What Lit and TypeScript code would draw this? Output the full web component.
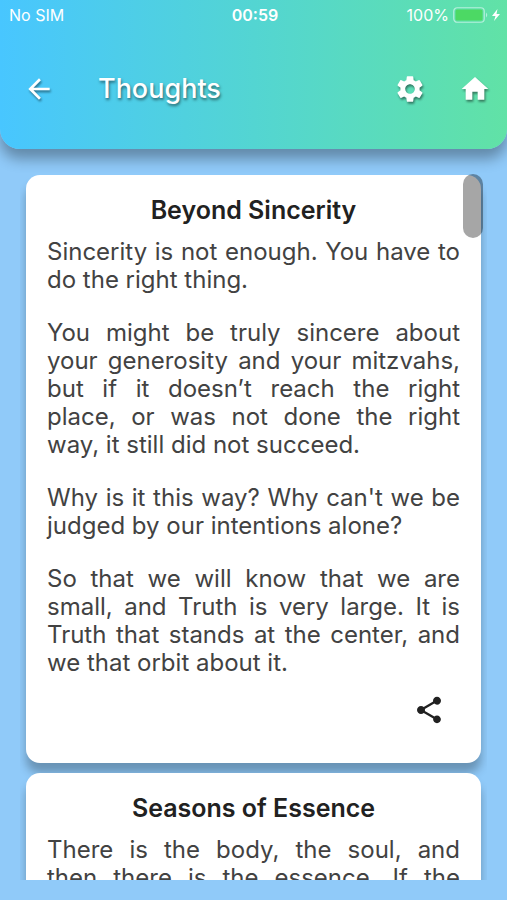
import { LitElement, html, css, svg } from "lit";
import { customElement, property } from "lit/decorators.js";
import { classMap } from "lit/directives/class-map.js";

interface Thought {
  title: string;
  paragraphs: string[];
  continues?: boolean;
}

const thoughts: Thought[] = [
  {
    title: "Beyond Sincerity",
    paragraphs: [
      "Sincerity is not enough. You have to do the right thing.",
      "You might be truly sincere about your generosity and your mitzvahs, but if it doesn’t reach the right place, or was not done the right way, it still did not succeed.",
      "Why is it this way? Why can't we be judged by our intentions alone?",
      "So that we will know that we are small, and Truth is very large. It is Truth that stands at the center, and we that orbit about it.",
    ],
  },
  {
    title: "Seasons of Essence",
    paragraphs: ["There is the body, the soul, and then there is the essence. If the"],
    continues: true,
  },
];

const paths = {
  back: svg`<path d="M20 11H7.83l5.59-5.59L12 4l-8 8 8 8 1.41-1.41L7.83 13H20v-2z"/>`,
  gear: svg`<path d="M19.14 12.94c.04-.3.06-.61.06-.94 0-.32-.02-.64-.07-.94l2.03-1.58a.49.49 0 0 0 .12-.61l-1.92-3.32a.488.488 0 0 0-.59-.22l-2.39.96c-.5-.38-1.03-.7-1.62-.94l-.36-2.54a.484.484 0 0 0-.48-.41h-3.84c-.24 0-.43.17-.47.41l-.36 2.54c-.59.24-1.13.57-1.62.94l-2.39-.96c-.22-.08-.47 0-.59.22L2.74 8.87c-.12.21-.08.47.12.61l2.03 1.58c-.05.3-.09.63-.09.94s.02.64.07.94l-2.03 1.58a.49.49 0 0 0-.12.61l1.92 3.32c.12.22.37.29.59.22l2.39-.96c.5.38 1.03.7 1.62.94l.36 2.54c.05.24.24.41.48.41h3.84c.24 0 .44-.17.47-.41l.36-2.54c.59-.24 1.13-.56 1.62-.94l2.39.96c.22.08.47 0 .59-.22l1.92-3.32c.12-.22.07-.47-.12-.61l-2.01-1.58zM12 15.6A3.61 3.61 0 0 1 8.4 12c0-1.98 1.62-3.6 3.6-3.6s3.6 1.62 3.6 3.6-1.62 3.6-3.6 3.6z"/>`,
  home: svg`<path d="M10 20v-6h4v6h5v-8h3L12 3 2 12h3v8z"/>`,
  share: svg`<path d="M18 16.08c-.76 0-1.44.3-1.96.77L8.91 12.7c.05-.23.09-.46.09-.7s-.04-.47-.09-.7l7.05-4.11c.54.5 1.25.81 2.04.81 1.66 0 3-1.34 3-3s-1.34-3-3-3-3 1.34-3 3c0 .24.04.47.09.7L8.04 9.81C7.5 9.31 6.79 9 6 9c-1.66 0-3 1.34-3 3s1.34 3 3 3c.79 0 1.5-.31 2.04-.81l7.12 4.16c-.05.21-.08.43-.08.65 0 1.61 1.31 2.92 2.92 2.92s2.92-1.31 2.92-2.92-1.31-2.92-2.92-2.92z"/>`,
};

const icon = (name: keyof typeof paths) =>
  html`<svg class="icon" viewBox="0 0 24 24" aria-hidden="true">${paths[name]}</svg>`;

const controls = css`
  * {
    box-sizing: border-box;
  }
  button {
    display: flex;
    align-items: center;
    justify-content: center;
    width: 48px;
    height: 48px;
    padding: 0;
    border: 0;
    background: none;
    color: inherit;
    cursor: pointer;
  }
  .icon {
    display: block;
    width: 32px;
    height: 32px;
    fill: currentColor;
    overflow: visible;
  }
`;

@customElement("thought-card")
export class ThoughtCard extends LitElement {
  @property({ attribute: false }) thought!: Thought;

  static styles = [
    controls,
    css`
      :host {
        display: block;
      }
      .card {
        padding: 21px 21px 29px;
        border-radius: 14px;
        background: #fff;
        color: #424242;
        box-shadow: 0 10px 10px rgba(0, 0, 0, 0.27);
      }
      h2 {
        margin: 0 0 14px;
        font-size: 25px;
        font-weight: 600;
        line-height: 28px;
        text-align: center;
        color: #212121;
      }
      p {
        margin: 0 0 25px;
        font-size: 24px;
        line-height: 28px;
        text-align: justify;
      }
      p:last-of-type {
        margin-bottom: 9px;
      }
      .continues p:last-of-type {
        text-align-last: justify;
      }
      .actions {
        display: flex;
        justify-content: flex-end;
        padding-right: 7px;
        color: #212121;
      }
    `,
  ];

  render() {
    return html`
      <article class=${classMap({ card: true, continues: !!this.thought.continues })}>
        <h2>${this.thought.title}</h2>
        ${this.thought.paragraphs.map((text) => html`<p>${text}</p>`)}
        <div class="actions">
          <button aria-label="Share">${icon("share")}</button>
        </div>
      </article>
    `;
  }
}

@customElement("app-root")
export class AppRoot extends LitElement {
  static styles = [
    controls,
    css`
      :host {
        display: flex;
        flex-direction: column;
        height: 100vh;
        overflow: hidden;
        background: #90caf9;
        font-family: Inter, "Liberation Sans", sans-serif;
      }
      header {
        flex: none;
        color: #fff;
        background: linear-gradient(90deg, #48c6ff, #53d5d2 50%, #61e2a6);
        border-radius: 0 0 20px 20px;
        box-shadow: 0 10px 14px rgba(0, 0, 0, 0.32);
      }
      .status {
        display: grid;
        grid-template-columns: 1fr auto 1fr;
        align-items: center;
        height: 30px;
        padding: 0 6px 0 9px;
        font-size: 16px;
        line-height: 20px;
      }
      .time {
        font-weight: 600;
      }
      .power {
        display: flex;
        align-items: center;
        justify-content: flex-end;
        gap: 4px;
      }
      .battery {
        width: 48px;
        height: 16px;
      }
      .bar {
        display: flex;
        align-items: center;
        height: 119px;
        padding: 0 8px 2px 15px;
      }
      .bar .icon {
        filter: drop-shadow(1px 2px 1px rgba(0, 0, 0, 0.45));
      }
      h1 {
        flex: 1;
        margin: 0 0 0 35px;
        font-size: 27px;
        font-weight: 500;
        line-height: 32px;
        text-shadow: 1px 2px 3px rgba(0, 0, 0, 0.5);
      }
      .tools {
        display: flex;
        gap: 17px;
      }
      main {
        position: relative;
        flex: 1;
        min-height: 0;
        margin: 25px 20px 20px;
        padding: 1px 6px 0;
        overflow: hidden;
      }
      .list {
        display: flex;
        flex-direction: column;
        gap: 10px;
      }
      .thumb {
        position: absolute;
        top: 0;
        right: 4px;
        width: 20px;
        height: 64px;
        border-radius: 10px;
        background: rgba(0, 0, 0, 0.35);
      }
    `,
  ];

  render() {
    return html`
      <header>
        <div class="status">
          <span>No SIM</span>
          <span class="time">00:59</span>
          <span class="power">
            <span>100%</span>
            <svg class="battery" viewBox="0 0 48 16" role="img" aria-label="Charging">
              <rect x="0.75" y="0.75" width="30.5" height="14.5" rx="3.5" fill="none" stroke="#b5efdb" stroke-width="1.2" />
              <rect x="2.5" y="2.5" width="27" height="11" rx="1.5" fill="#4cd964" />
              <path d="M33 5.5q2.5 2.5 0 5z" fill="#b5efdb" />
              <path d="M44.5 2L39 9h3.5L41 14l6-7h-3.5z" fill="#fff" />
            </svg>
          </span>
        </div>
        <div class="bar">
          <button aria-label="Back">${icon("back")}</button>
          <h1>Thoughts</h1>
          <div class="tools">
            <button aria-label="Settings">${icon("gear")}</button>
            <button aria-label="Home">${icon("home")}</button>
          </div>
        </div>
      </header>
      <main>
        <div class="list">
          ${thoughts.map((t) => html`<thought-card .thought=${t}></thought-card>`)}
        </div>
        <div class="thumb"></div>
      </main>
    `;
  }
}
